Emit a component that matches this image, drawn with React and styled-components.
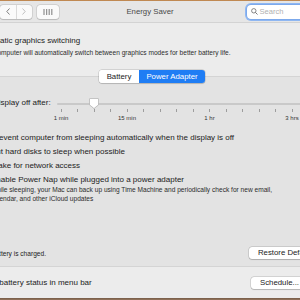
import styled, { createGlobalStyle } from "styled-components";

const GlobalStyle = createGlobalStyle`
  html, body {
    margin: 0;
    padding: 0;
  }
  body {
    width: 300px;
    height: 300px;
    overflow: hidden;
    background: linear-gradient(#dc9d5e, #b08562 40%, #8e6f58);
    font-family: "Liberation Sans", Arial, sans-serif;
    color: #222222;
    -webkit-font-smoothing: antialiased;
  }
`;

const TICK_COUNT = 16;
const TICK_LABELS = { 0: "1 min", 4: "15 min", 9: "1 hr", 14: "3 hrs" };

const App = () => {
  return (
    <>
      <GlobalStyle />
      <Window>
        <TitleBar>
          <LeftGroup>
            <Lights>
              <Light $color="#fe5f57" />
              <Light $color="#febc2e" />
              <Light $color="#28c840" />
            </Lights>
            <NavButtons>
              <NavHalf>
                <svg width="4" height="7" viewBox="0 0 4 7">
                  <path d="M3.5 0.5 L0.8 3.5 L3.5 6.5" fill="none" stroke="#707070" strokeWidth="0.9" />
                </svg>
              </NavHalf>
              <NavHalf $divider>
                <svg width="4" height="7" viewBox="0 0 4 7">
                  <path d="M0.5 0.5 L3.2 3.5 L0.5 6.5" fill="none" stroke="#b9b9b9" strokeWidth="0.9" />
                </svg>
              </NavHalf>
            </NavButtons>
            <GridButton>
              <svg width="10" height="6" viewBox="0 0 10 6">
                {[0, 1, 2].map((r) =>
                  [0, 1, 2, 3].map((c) => (
                    <circle key={`${r}-${c}`} cx={1 + c * 2.6} cy={1 + r * 2} r="0.75" fill="#5a5a5a" />
                  ))
                )}
              </svg>
            </GridButton>
          </LeftGroup>
          <Title>Energy Saver</Title>
          <RightGroup>
            <SearchField>
              <svg width="7" height="7" viewBox="0 0 7 7">
                <circle cx="2.8" cy="2.8" r="2.2" fill="none" stroke="#6a6a6a" strokeWidth="0.8" />
                <path d="M4.4 4.4 L6.5 6.5" stroke="#6a6a6a" strokeWidth="0.9" />
              </svg>
              <Placeholder>Search</Placeholder>
            </SearchField>
          </RightGroup>
        </TitleBar>

        <Main>
          <CheckRow $indent={5}>
            <Checkbox $checked />
            Automatic graphics switching
          </CheckRow>
          <Description $indent={19}>
            Your computer will automatically switch between graphics modes for better battery life.
          </Description>

          <TabBox>
            <Segmented>
              <Segment $width={40}>Battery</Segment>
              <Segment $width={66} $active>
                Power Adapter
              </Segment>
            </Segmented>

            <DisplayRow>
              <SliderLabel>Display off after:</SliderLabel>
              <Slider>
                <TrackArea>
                  <Thumb $value={2}>
                    <svg width="10" height="11" viewBox="0 0 10 11">
                      <path
                        d="M1.5 0.5 H8.5 A1 1 0 0 1 9.5 1.5 V6.8 L5 10.5 L0.5 6.8 V1.5 A1 1 0 0 1 1.5 0.5 Z"
                        fill="#ffffff"
                        stroke="#b4b4b4"
                        strokeWidth="0.6"
                      />
                    </svg>
                  </Thumb>
                </TrackArea>
                <TickRow>
                  {Array.from({ length: TICK_COUNT }).map((_, i) => (
                    <Tick key={i} />
                  ))}
                </TickRow>
                <TickRow $labels>
                  {Array.from({ length: TICK_COUNT }).map((_, i) => (
                    <TickLabel key={i}>{TICK_LABELS[i] || ""}</TickLabel>
                  ))}
                </TickRow>
              </Slider>
            </DisplayRow>

            <CheckList>
              <CheckRow>
                <Checkbox />
                Prevent computer from sleeping automatically when the display is off
              </CheckRow>
              <CheckRow>
                <Checkbox $checked />
                Put hard disks to sleep when possible
              </CheckRow>
              <CheckRow>
                <Checkbox $checked />
                Wake for network access
              </CheckRow>
              <div>
                <CheckRow>
                  <Checkbox $checked />
                  Enable Power Nap while plugged into a power adapter
                </CheckRow>
                <Description $indent={12} $tight>
                  While sleeping, your Mac can back up using Time Machine and periodically check for new email,
                  <br />
                  calendar, and other iCloud updates
                </Description>
              </div>
            </CheckList>

            <BoxFooter>
              <Info>Battery is charged.</Info>
              <PushButton>Restore Defaults</PushButton>
            </BoxFooter>
          </TabBox>

          <BottomRow>
            <CheckRow $indent={5}>
              <Checkbox $checked />
              Show battery status in menu bar
            </CheckRow>
            <PushButton>Schedule...</PushButton>
          </BottomRow>
        </Main>
      </Window>
    </>
  );
};

export default App;

const Window = styled.div`
  width: 420px;
  margin: 1px 0 0 -60px;
  background: #ececec;
  border-radius: 5px;
  overflow: hidden;
  box-shadow: 0 0 0 0.5px rgba(0, 0, 0, 0.25);
`;

const TitleBar = styled.div`
  display: grid;
  grid-template-columns: 1fr auto 1fr;
  align-items: center;
  height: 21px;
  padding: 0 8px;
  background: #e6e6e6;
  border-bottom: 1px solid #d3d3d3;
`;

const LeftGroup = styled.div`
  display: flex;
  align-items: center;
  gap: 5px;
`;

const Lights = styled.div`
  display: flex;
  gap: 5px;
  margin-right: 16px;
`;

const Light = styled.span`
  width: 7px;
  height: 7px;
  border-radius: 50%;
  background: ${(props) => props.$color};
`;

const NavButtons = styled.div`
  display: flex;
  height: 14px;
  border-radius: 3px;
  background: #fafafa;
  box-shadow: 0 0 0 0.5px rgba(0, 0, 0, 0.16), 0 0.5px 1px rgba(0, 0, 0, 0.12);
`;

const NavHalf = styled.div`
  width: 15.5px;
  display: flex;
  align-items: center;
  justify-content: center;
  border-left: ${(props) => (props.$divider ? "0.5px solid #dadada" : "none")};
`;

const GridButton = styled.div`
  width: 22px;
  height: 14px;
  display: flex;
  align-items: center;
  justify-content: center;
  border-radius: 3px;
  background: #fafafa;
  box-shadow: 0 0 0 0.5px rgba(0, 0, 0, 0.16), 0 0.5px 1px rgba(0, 0, 0, 0.12);
`;

const Title = styled.div`
  font-size: 7.8px;
  color: #4a4a4a;
  white-space: nowrap;
`;

const RightGroup = styled.div`
  display: flex;
  justify-content: flex-end;
`;

const SearchField = styled.div`
  box-sizing: border-box;
  width: 105px;
  height: 14px;
  display: flex;
  align-items: center;
  gap: 1.5px;
  padding-left: 4px;
  background: #ffffff;
  border-radius: 4px;
  box-shadow: 0 0 0 0.5px #6a9be6, 0 0 0 2px #8fb7f2;
`;

const Placeholder = styled.span`
  font-size: 7.6px;
  color: #b1b1b1;
`;

const Main = styled.div`
  display: flex;
  flex-direction: column;
  padding: 13px 20px 9px;
`;

const CheckRow = styled.div`
  display: flex;
  align-items: center;
  gap: 3px;
  margin-left: ${(props) => props.$indent || 0}px;
  font-size: 8px;
  line-height: 10px;
  white-space: nowrap;
  color: #222222;
`;

const Checkbox = styled.span`
  box-sizing: border-box;
  width: 9px;
  height: 9px;
  flex: none;
  border-radius: 2px;
  background: ${(props) => (props.$checked ? "#1f7cf3" : "#ffffff")};
  box-shadow: 0 0 0 0.5px rgba(0, 0, 0, 0.22);
`;

const Description = styled.div`
  margin: ${(props) => (props.$tight ? 0 : 1.5)}px 0 0 ${(props) => props.$indent}px;
  font-size: 6.6px;
  line-height: 9px;
  white-space: nowrap;
  color: #2c2c2c;
`;

const TabBox = styled.div`
  display: flex;
  flex-direction: column;
  margin-top: 19.5px;
  padding: 0 14px 7px 18px;
  background: #e3e3e3;
  border: 1px solid #d4d4d4;
  border-radius: 4px;
`;

const Segmented = styled.div`
  align-self: center;
  display: flex;
  margin-top: -7px;
  height: 13px;
  border-radius: 3px;
  overflow: hidden;
  box-shadow: 0 0 0 0.5px rgba(0, 0, 0, 0.2), 0 0.5px 1px rgba(0, 0, 0, 0.12);
`;

const Segment = styled.div`
  width: ${(props) => props.$width}px;
  display: flex;
  align-items: center;
  justify-content: center;
  font-size: 7.8px;
  white-space: nowrap;
  color: ${(props) => (props.$active ? "#ffffff" : "#222222")};
  background: ${(props) => (props.$active ? "#1f7df4" : "#ffffff")};
`;

const DisplayRow = styled.div`
  display: grid;
  grid-template-columns: 64px 1fr;
  margin: 15px 0 0 14px;
`;

const SliderLabel = styled.div`
  font-size: 8px;
  line-height: 10px;
  white-space: nowrap;
`;

const Slider = styled.div`
  display: flex;
  flex-direction: column;
  min-width: 0;
`;

const TrackArea = styled.div`
  position: relative;
  height: 12px;

  &::before {
    content: "";
    position: absolute;
    left: 0;
    right: 0;
    top: 5px;
    height: 2px;
    border-radius: 1px;
    background: #c9c9c9;
  }
`;

const Thumb = styled.div`
  position: absolute;
  top: 0;
  left: ${(props) => 4 + props.$value * 16.5 - 5}px;
  width: 10px;
  height: 11px;
  filter: drop-shadow(0 0.5px 0.6px rgba(0, 0, 0, 0.25));

  svg {
    display: block;
  }
`;

const TickRow = styled.div`
  display: flex;
  gap: 15.5px;
  padding-left: 3.5px;
  margin-top: ${(props) => (props.$labels ? 3 : -1)}px;
  height: ${(props) => (props.$labels ? 7 : 3)}px;
`;

const Tick = styled.span`
  flex: 0 0 1px;
  background: #9d9d9d;
`;

const TickLabel = styled.span`
  flex: 0 0 1px;
  min-width: 0;
  display: flex;
  justify-content: center;
  font-size: 6px;
  line-height: 7px;
  white-space: nowrap;
  color: #333333;
`;

const CheckList = styled.div`
  display: flex;
  flex-direction: column;
  gap: 4px;
  margin-top: 11px;
`;

const BoxFooter = styled.div`
  display: flex;
  align-items: center;
  justify-content: space-between;
  margin-top: 44px;
`;

const Info = styled.div`
  margin-left: 12px;
  font-size: 6.6px;
  line-height: 9px;
  color: #222222;
`;

const PushButton = styled.button`
  height: 12px;
  padding: 0 9px;
  border: none;
  border-radius: 3px;
  background: #ffffff;
  box-shadow: 0 0 0 0.5px rgba(0, 0, 0, 0.2), 0 0.5px 1px rgba(0, 0, 0, 0.15);
  font-family: inherit;
  font-size: 7.8px;
  line-height: 12px;
  color: #222222;
  white-space: nowrap;
`;

const BottomRow = styled.div`
  display: flex;
  align-items: center;
  justify-content: space-between;
  margin-top: 10px;
  padding-right: 32px;
`;
